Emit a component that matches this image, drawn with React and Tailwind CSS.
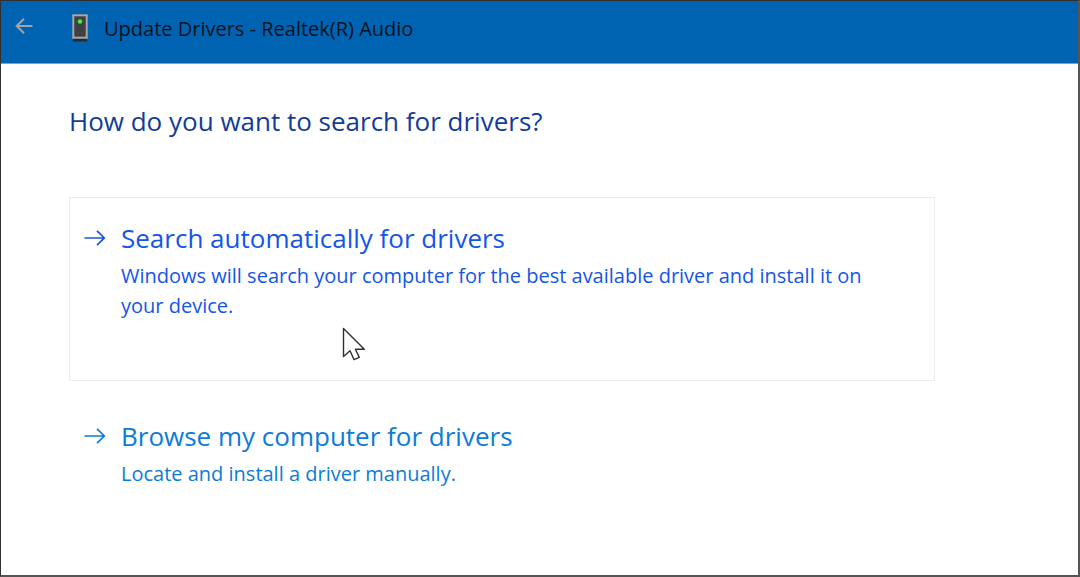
function ArrowRight() {
  return (
    <svg className="h-[16px] w-[22px] shrink-0" viewBox="0 0 22 16" fill="none" stroke="currentColor" strokeWidth="1.7" aria-hidden="true">
      <path d="M0.5 8H20.5M13 0.8L20.3 8L13 15.2" />
    </svg>
  );
}

function DeviceIcon() {
  return (
    <svg className="h-[28px] w-4 shrink-0" viewBox="0 0 16 28" aria-hidden="true">
      <path d="M2 24H14L15.5 27.5H0.5Z" fill="#262a2e" />
      <rect x="1.3" y="1.3" width="13.4" height="22.4" fill="#404040" stroke="#a3a8ac" strokeWidth="2" />
      <circle cx="8" cy="7.5" r="2.3" fill="#3cf23c" />
    </svg>
  );
}

function Cursor() {
  return (
    <svg className="pointer-events-none absolute top-[130px] left-[273px] h-[35px] w-[24px]" viewBox="0 0 24 35" aria-hidden="true">
      <path d="M1.5 1.5V29.5L8 23.8L12 32.6L17.3 30.4L13.4 22.2H22.3Z" fill="#fff" stroke="#30303a" strokeWidth="1.4" strokeLinejoin="round" />
    </svg>
  );
}

function Choice({ title, text, className }) {
  return (
    <button
      type="button"
      className={`grid w-full cursor-default grid-cols-[auto_1fr] content-start items-center gap-x-[15px] gap-y-[5px] border pr-10 pl-[14px] text-left ${className}`}
    >
      <ArrowRight />
      <span className="text-[26px] leading-9">{title}</span>
      <span className="col-start-2 text-[20px] leading-[30px]">{text}</span>
    </button>
  );
}

export default function App() {
  return (
    <div className="flex min-h-screen flex-col border border-[#303030] border-r-2 border-b-2 border-r-[#555] border-b-[#555] bg-white font-['Open_Sans','Noto_Sans',sans-serif]">
      <header className="flex h-[63px] items-start border-b border-[#45b5ee] bg-[#0063b1] pt-[11px] pl-[14px]">
        <button type="button" aria-label="Back" className="mt-[6px] mr-[39px] cursor-default text-[#a0a4a8]">
          <svg className="h-4 w-[18px]" viewBox="0 0 18 16" fill="none" stroke="currentColor" strokeWidth="2" aria-hidden="true">
            <path d="M17.5 8H1.5M9 0.8L1.7 8L9 15.2" />
          </svg>
        </button>
        <div className="pt-[2px]">
          <DeviceIcon />
        </div>
        <span className="ml-4 text-[20px] leading-[34px] text-[#06121e]">Update Drivers - Realtek(R) Audio</span>
      </header>
      <main className="pt-[39px] pr-[143px] pb-8 pl-[68px]">
        <h1 className="text-[26px] leading-9 text-[#123c98]">How do you want to search for drivers?</h1>
        <div className="relative mt-[58px]">
          <Choice
            title="Search automatically for drivers"
            text="Windows will search your computer for the best available driver and install it on your device."
            className="min-h-[184px] border-[#ececec] pt-[22px] text-[#1455e8]"
          />
          <Cursor />
        </div>
        <Choice
          title="Browse my computer for drivers"
          text="Locate and install a driver manually."
          className="mt-4 border-transparent pt-5 pb-6 text-[#0c7bd9]"
        />
      </main>
    </div>
  );
}
